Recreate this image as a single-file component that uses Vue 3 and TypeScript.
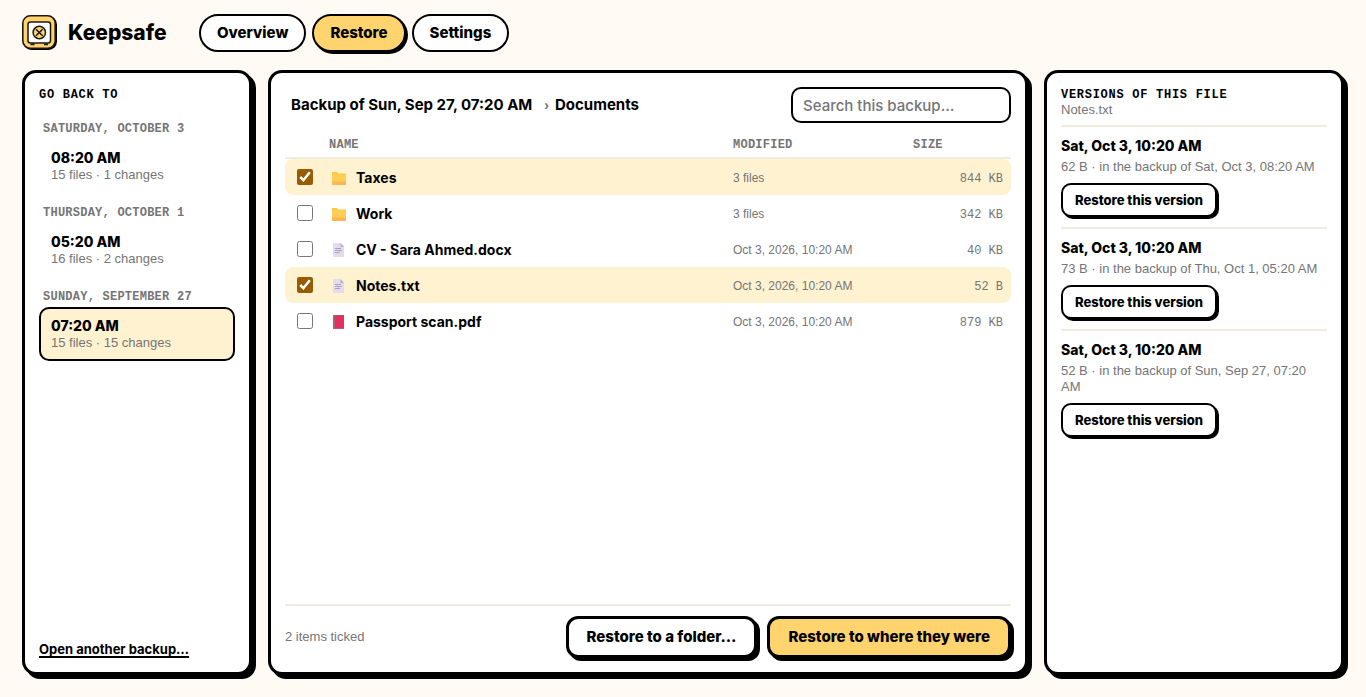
<script setup lang="ts">
import { ref, computed } from 'vue'

interface Snapshot { id: number; day: string; time: string; info: string }
interface Entry { name: string; kind: 'folder' | 'doc' | 'book'; modified: string; size: string; ticked: boolean }
interface Version { when: string; detail: string }

const tabs = ['Overview', 'Restore', 'Settings']
const activeTab = ref('Restore')

const snapshots: Snapshot[] = [
  { id: 1, day: 'Saturday, October 3', time: '08:20 AM', info: '15 files · 1 changes' },
  { id: 2, day: 'Thursday, October 1', time: '05:20 AM', info: '16 files · 2 changes' },
  { id: 3, day: 'Sunday, September 27', time: '07:20 AM', info: '15 files · 15 changes' },
]
const activeSnapshot = ref(3)

const entries = ref<Entry[]>([
  { name: 'Taxes', kind: 'folder', modified: '3 files', size: '844 KB', ticked: true },
  { name: 'Work', kind: 'folder', modified: '3 files', size: '342 KB', ticked: false },
  { name: 'CV - Sara Ahmed.docx', kind: 'doc', modified: 'Oct 3, 2026, 10:20 AM', size: '40 KB', ticked: false },
  { name: 'Notes.txt', kind: 'doc', modified: 'Oct 3, 2026, 10:20 AM', size: '52 B', ticked: true },
  { name: 'Passport scan.pdf', kind: 'book', modified: 'Oct 3, 2026, 10:20 AM', size: '879 KB', ticked: false },
])
const tickedCount = computed(() => entries.value.filter((e) => e.ticked).length)

const versions: Version[] = [
  { when: 'Sat, Oct 3, 10:20 AM', detail: '62 B · in the backup of Sat, Oct 3, 08:20 AM' },
  { when: 'Sat, Oct 3, 10:20 AM', detail: '73 B · in the backup of Thu, Oct 1, 05:20 AM' },
  { when: 'Sat, Oct 3, 10:20 AM', detail: '52 B · in the backup of Sun, Sep 27, 07:20 AM' },
]
const query = ref('')
</script>

<template>
  <div class="page">
    <header class="top">
      <div class="brand">
        <svg class="logo" viewBox="0 1 36 36" aria-hidden="true">
          <rect x="1" y="2" width="34" height="34" rx="8.500" fill="#000" />
          <rect x="0.800" y="1.800" width="32.400" height="32.400" rx="7.500" fill="#ffd36e" stroke="#1c1a17" stroke-width="1.600" />
          <rect x="6" y="8" width="22.500" height="21" rx="2.500" fill="#fff" stroke="#1c1a17" stroke-width="1.500" />
          <path d="M8.500 30.300h4M22 30.300h4" stroke="#1c1a17" stroke-width="1.800" />
          <circle cx="17.300" cy="18.500" r="6.200" fill="#ffd36e" stroke="#1c1a17" stroke-width="1.500" />
          <path d="M14 15.200l6.600 6.600M20.600 15.200L14 21.800" stroke="#1c1a17" stroke-width="1.500" />
        </svg>
        <span class="brand-name">Keepsafe</span>
      </div>
      <nav class="tabs">
        <button v-for="t in tabs" :key="t" type="button" class="tab" :class="{ active: t === activeTab }" @click="activeTab = t">{{ t }}</button>
      </nav>
    </header>

    <main class="columns">
      <aside class="panel">
        <h2 class="heading">Go back to</h2>
        <div class="snapshots">
          <section v-for="s in snapshots" :key="s.id">
            <h3 class="day">{{ s.day }}</h3>
            <button type="button" class="snapshot" :class="{ active: s.id === activeSnapshot }" @click="activeSnapshot = s.id">
              <span class="time">{{ s.time }}</span>
              <span class="note">{{ s.info }}</span>
            </button>
          </section>
        </div>
        <a class="another" href="#">Open another backup…</a>
      </aside>

      <section class="panel">
        <div class="bar">
          <div class="crumbs">
            <button type="button" class="crumb">Backup of Sun, Sep 27, 07:20 AM</button>
            <span class="chevron">›</span>
            <button type="button" class="crumb">Documents</button>
          </div>
          <input v-model="query" class="search" type="text" placeholder="Search this backup…" aria-label="Search this backup" />
        </div>
        <table class="files">
          <colgroup>
            <col class="c-tick" /><col /><col class="c-mod" /><col class="c-size" />
          </colgroup>
          <thead>
            <tr><th></th><th>Name</th><th>Modified</th><th>Size</th></tr>
          </thead>
          <tbody>
            <tr v-for="(e, i) in entries" :key="e.name" :class="{ ticked: e.ticked }">
              <td class="tick"><input :id="'f' + i" v-model="e.ticked" type="checkbox" /></td>
              <td>
                <label class="name" :for="'f' + i">
                  <svg v-if="e.kind === 'folder'" class="icon" viewBox="0 0 18 18" aria-hidden="true">
                    <path d="M2 3h5l1 1.500h8V16H2z" fill="#ffc943" />
                    <path d="M2 6h14v6.500H2z" fill="#ffce54" />
                    <path d="M2 12.500h14V16H2z" fill="#ffb755" />
                  </svg>
                  <svg v-else-if="e.kind === 'doc'" class="icon" viewBox="0 0 18 18" aria-hidden="true">
                    <path d="M3 2h8l3 3.500V16H3z" fill="#e2dcee" />
                    <path d="M10.500 2v4H14z" fill="#b6b0c4" />
                    <path d="M5 7.500h6M5 9.500h7M5 11.500h5" stroke="#a9a3b8" stroke-width="1" />
                  </svg>
                  <svg v-else class="icon" viewBox="0 0 18 18" aria-hidden="true">
                    <path d="M3 2h11v14H3z" fill="#e3315f" />
                    <path d="M3 2h2v14H3z" fill="#b0606c" />
                    <path d="M3 15h11v1H3z" fill="#b55a92" />
                    <path d="M5 2h9v1H5z" fill="#cf4468" />
                  </svg>
                  <span>{{ e.name }}</span>
                </label>
              </td>
              <td class="modified">{{ e.modified }}</td>
              <td class="size">{{ e.size }}</td>
            </tr>
          </tbody>
        </table>
        <footer class="actions">
          <span class="note count">{{ tickedCount }} items ticked</span>
          <button type="button" class="btn">Restore to a folder…</button>
          <button type="button" class="btn primary">Restore to where they were</button>
        </footer>
      </section>

      <aside class="panel">
        <h2 class="heading">Versions of this file</h2>
        <p class="note file">Notes.txt</p>
        <article v-for="v in versions" :key="v.detail" class="version">
          <h3 class="when">{{ v.when }}</h3>
          <p class="note detail">{{ v.detail }}</p>
          <button type="button" class="btn small">Restore this version</button>
        </article>
      </aside>
    </main>
  </div>
</template>

<style>
body {
  margin: 0;
  background: #fffbf4;
}
</style>

<style scoped>
.page,
.page * {
  box-sizing: border-box;
}
.page {
  --mono: "Liberation Mono", monospace;
  --plain: "Liberation Sans", sans-serif;
  --muted: #757575;
  --rule: #f0ebdf;
  min-height: 100vh;
  padding: 14px 22px 22px;
  display: flex;
  flex-direction: column;
  gap: 18px;
  font-family: Inter, "Liberation Sans", sans-serif;
  font-size: 14px;
  line-height: 18px;
  color: #000;
}
h2, h3, p {
  margin: 0;
}
button, input {
  font: inherit;
  color: inherit;
}
button {
  cursor: pointer;
}
.top {
  display: flex;
  align-items: center;
  gap: 32px;
}
.brand {
  display: flex;
  align-items: center;
  gap: 10px;
  min-width: 145px;
}
.logo {
  width: 36px;
  height: 36px;
}
.brand-name {
  font-size: 21px;
  line-height: 28px;
  font-weight: 800;
}
.tabs {
  display: flex;
  gap: 6px;
}
.tab {
  height: 38px;
  padding: 0 16px;
  border: 2px solid #000;
  border-radius: 19px;
  background: #fff;
  font-size: 15px;
  font-weight: 800;
}
.tab.active {
  background: #ffd36e;
  box-shadow: 2px 2px 0 #000;
}
.columns {
  flex: 1;
  display: grid;
  grid-template-columns: 230px minmax(0, 1fr) 300px;
  gap: 16px;
}
.panel {
  display: flex;
  flex-direction: column;
  padding: 14px;
  border: 3px solid #000;
  border-radius: 14px;
  background: #fff;
  box-shadow: 4px 4px 0 #000;
}
.heading,
.day,
th {
  font-family: var(--mono);
  font-size: 12px;
  line-height: 16px;
  font-weight: 700;
  text-transform: uppercase;
  letter-spacing: 0.02em;
}
.heading {
  letter-spacing: 0.06em;
}
.note {
  font-family: var(--plain);
  font-size: 13px;
  line-height: 16px;
  color: var(--muted);
}
.snapshots {
  flex: 1;
  display: flex;
  flex-direction: column;
  gap: 12px;
  padding-top: 18px;
}
.day {
  padding: 0 4px;
  margin-bottom: 2px;
  color: var(--muted);
}
.snapshot {
  display: flex;
  flex-direction: column;
  width: 100%;
  padding: 8px 10px;
  border: 2px solid transparent;
  border-radius: 10px;
  background: none;
  text-align: left;
}
.snapshot.active {
  border-color: #000;
  background: #fff2d0;
}
.time,
.when {
  font-size: 14px;
  line-height: 18px;
  font-weight: 800;
}
.another {
  align-self: flex-start;
  border-bottom: 2px solid #000;
  color: #000;
  font-size: 13px;
  line-height: 14px;
  font-weight: 700;
  text-decoration: none;
}
.bar {
  display: flex;
  align-items: center;
  justify-content: space-between;
  margin-bottom: 8px;
}
.crumbs {
  display: flex;
  align-items: center;
}
.crumb {
  padding: 4px 6px;
  border: 0;
  background: none;
  font-size: 15px;
  font-weight: 700;
}
.chevron {
  padding: 0 2px 0 6px;
  color: var(--muted);
  font-family: var(--plain);
  font-weight: 700;
}
.chevron + .crumb {
  padding-left: 4px;
}
.search {
  width: 220px;
  height: 36px;
  padding: 0 10px;
  border: 2px solid #000;
  border-radius: 10px;
  background: #fff;
  font-size: 15px;
  font-weight: 500;
}
.search::placeholder {
  color: var(--muted);
}
.files {
  width: 100%;
  table-layout: fixed;
  border-spacing: 0;
}
.c-tick {
  width: 36px;
}
.c-mod {
  width: 180px;
}
.c-size {
  width: 106px;
}
th {
  height: 28px;
  padding: 2px 8px 0;
  border-bottom: 2px solid var(--rule);
  color: var(--muted);
  text-align: left;
}
td {
  height: 36px;
  padding: 2px 8px 0;
}
.ticked td {
  background: #fff2d0;
}
td:first-child {
  border-radius: 8px 0 0 8px;
}
td:last-child {
  border-radius: 0 8px 8px 0;
}
.tick {
  padding: 0 0 0 12px;
}
.tick input {
  display: block;
  width: 16px;
  height: 16px;
  margin: 0;
  accent-color: #985b00;
}
.name {
  display: flex;
  align-items: center;
  gap: 8px;
  padding-left: 1px;
  font-weight: 700;
}
.icon {
  width: 18px;
  height: 18px;
}
.modified {
  font-family: var(--plain);
  font-size: 12px;
  color: var(--muted);
}
.size {
  padding-top: 4px;
  font-family: var(--mono);
  font-size: 12px;
  color: var(--muted);
  text-align: right;
}
.actions {
  display: flex;
  align-items: center;
  gap: 10px;
  margin-top: auto;
  padding-top: 10px;
  border-top: 2px solid var(--rule);
}
.count {
  margin-right: auto;
}
.btn {
  height: 42px;
  padding: 0 18px;
  border: 3px solid #000;
  border-radius: 12px;
  background: #fff;
  box-shadow: 3px 3px 0 #000;
  font-size: 15px;
  font-weight: 800;
}
.primary {
  background: #ffd36e;
}
.small {
  height: 34px;
  padding: 0 12px;
  border-width: 2px;
  border-radius: 10px;
  box-shadow: 2px 2px 0 #000;
  font-size: 13px;
}
.file {
  margin-bottom: 8px;
  line-height: 14px;
}
.version {
  padding: 10px 0;
  border-top: 2px solid var(--rule);
}
.detail {
  margin: 4px 0 8px;
}
</style>
